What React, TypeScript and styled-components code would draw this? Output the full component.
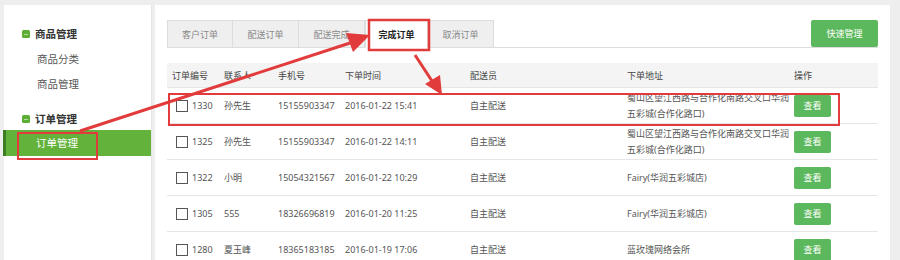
import React from 'react';
import styled, { createGlobalStyle } from 'styled-components';

const GlobalStyle = createGlobalStyle`
  html, body {
    margin: 0;
    padding: 0;
    background: #eeeeee;
    font-family: "Noto Sans", "Noto Sans CJK SC", sans-serif;
  }
`;

const Page = styled.div`
  position: relative;
  width: 900px;
  height: 260px;
  overflow: hidden;
  display: flex;
  padding: 5px 10px 0 4px;
  box-sizing: border-box;
  background: #eeeeee;
`;

const Sidebar = styled.div`
  width: 148px;
  background: #fff;
  padding-top: 20px;
  border-right: 1px solid #e4e4e4;
  box-sizing: border-box;
`;

const Group = styled.div<{ $gap?: number }>`
  margin-top: ${(p) => p.$gap || 0}px;
`;

const GroupTitle = styled.div`
  height: 18px;
  line-height: 18px;
  display: flex;
  align-items: center;
  padding-left: 18px;
  font-size: 10.5px;
  font-weight: 700;
  color: #333;
`;

const Bullet = styled.span`
  position: relative;
  width: 8px;
  height: 8px;
  border-radius: 1.5px;
  background: #5cae35;
  margin-right: 5px;
  &::after {
    content: '';
    position: absolute;
    left: 2px;
    right: 2px;
    top: 3.5px;
    height: 1px;
    background: rgba(255, 255, 255, 0.55);
  }
`;

const MenuList = styled.div<{ $top: number }>`
  padding-top: ${(p) => p.$top}px;
`;

const MenuItem = styled.div<{ $active?: boolean }>`
  height: ${(p) => (p.$active ? 26 : 25)}px;
  line-height: ${(p) => (p.$active ? 26 : 25)}px;
  padding-left: 30px;
  font-size: 10.5px;
  color: ${(p) => (p.$active ? '#fff' : '#555')};
  background: ${(p) => (p.$active ? '#62b23b' : 'transparent')};
  border-left: 3px solid ${(p) => (p.$active ? '#3f7d22' : 'transparent')};
  margin-left: ${(p) => (p.$active ? -1 : 0)}px;
`;

const Main = styled.div`
  flex: 1;
  margin-left: 3px;
  background: #fff;
  padding: 15px 12px 0 12px;
  box-sizing: border-box;
`;

const TabBar = styled.div`
  display: flex;
  align-items: flex-end;
  border-bottom: 1px solid #dddddd;
  height: 27px;
`;

const Tab = styled.div<{ $active?: boolean }>`
  width: ${(p) => (p.$active ? 63 : 66)}px;
  height: 28px;
  box-sizing: border-box;
  display: flex;
  align-items: center;
  justify-content: center;
  font-size: 9px;
  color: ${(p) => (p.$active ? '#222' : '#888')};
  font-weight: ${(p) => (p.$active ? 700 : 400)};
  background: ${(p) => (p.$active ? '#fff' : '#efefef')};
  border: 1px solid #dddddd;
  border-left-width: ${(p) => (p.$active ? 1 : 0)}px;
  border-bottom-color: ${(p) => (p.$active ? '#fff' : '#ddd')};
  margin-bottom: -1px;
  &:first-child {
    border-left-width: 1px;
  }
`;

const Spacer = styled.div`
  flex: 1;
`;

const GreenButton = styled.button<{ $w: number; $h: number }>`
  width: ${(p) => p.$w}px;
  height: ${(p) => p.$h}px;
  background: #5cb85c;
  border: none;
  border-radius: 2px;
  color: #fff;
  font-family: inherit;
  font-size: 9px;
  padding: 0;
  cursor: pointer;
`;

const TopButton = styled(GreenButton)`
  align-self: flex-start;
`;

const Table = styled.div`
  margin-top: 15px;
`;

const cols = '52px 54px 67px 125px 157px 167px 1fr';

const HeadRow = styled.div`
  display: grid;
  grid-template-columns: ${cols};
  height: 25px;
  align-items: center;
  background: #f4f4f4;
  border-bottom: 1px solid #e6e6e6;
  box-sizing: border-box;
`;

const HeadCell = styled.div`
  padding-left: 5px;
  font-size: 9px;
  color: #444;
`;

const Row = styled.div`
  display: grid;
  grid-template-columns: ${cols};
  height: 36px;
  align-items: center;
  border-bottom: 1px solid #e6e6e6;
  box-sizing: border-box;
`;

const Cell = styled.div<{ $first?: boolean }>`
  padding-left: ${(p) => (p.$first ? 9 : 5)}px;
  font-size: 9px;
  color: #555;
  display: flex;
  align-items: center;
`;

const AddressCell = styled.div`
  padding-left: 5px;
  font-size: 9px;
  line-height: 16px;
  color: #555;
`;

const Check = styled.span`
  width: 10px;
  height: 10px;
  border: 1px solid #555;
  background: #fff;
  margin-right: 4px;
  flex-shrink: 0;
`;

const Overlay = styled.svg`
  position: absolute;
  left: 0;
  top: 0;
  pointer-events: none;
`;

const orders = [
  { id: '1330', name: '孙先生', phone: '15155903347', time: '2016-01-22 15:41', staff: '自主配送', addr: '蜀山区望江西路与合作化南路交叉口华润五彩城(合作化路口)' },
  { id: '1325', name: '孙先生', phone: '15155903347', time: '2016-01-22 14:11', staff: '自主配送', addr: '蜀山区望江西路与合作化南路交叉口华润五彩城(合作化路口)' },
  { id: '1322', name: '小明', phone: '15054321567', time: '2016-01-22 10:29', staff: '自主配送', addr: 'Fairy(华润五彩城店)' },
  { id: '1305', name: '555', phone: '18326696819', time: '2016-01-20 11:25', staff: '自主配送', addr: 'Fairy(华润五彩城店)' },
  { id: '1280', name: '夏玉峰', phone: '18365183185', time: '2016-01-19 17:06', staff: '自主配送', addr: '蓝玫瑰网络会所' },
];

const tabs = ['客户订单', '配送订单', '配送完成', '完成订单', '取消订单'];
const heads = ['订单编号', '联系人', '手机号', '下单时间', '配送员', '下单地址', '操作'];

const RED = '#e23b3b';

const App: React.FC = () => {
  return (
    <Page>
      <GlobalStyle />
      <Sidebar>
        <Group>
          <GroupTitle><Bullet />商品管理</GroupTitle>
          <MenuList $top={4}>
            <MenuItem>商品分类</MenuItem>
            <MenuItem>商品管理</MenuItem>
          </MenuList>
        </Group>
        <Group $gap={13}>
          <GroupTitle><Bullet />订单管理</GroupTitle>
          <MenuList $top={2}>
            <MenuItem $active>订单管理</MenuItem>
          </MenuList>
        </Group>
      </Sidebar>
      <Main>
        <TabBar>
          {tabs.map((t) => (
            <Tab key={t} $active={t === '完成订单'}>{t}</Tab>
          ))}
          <Spacer />
          <TopButton $w={67} $h={27}>快速管理</TopButton>
        </TabBar>
        <Table>
          <HeadRow>
            {heads.map((h) => (
              <HeadCell key={h}>{h}</HeadCell>
            ))}
          </HeadRow>
          {orders.map((o) => (
            <Row key={o.id}>
              <Cell $first><Check />{o.id}</Cell>
              <Cell>{o.name}</Cell>
              <Cell>{o.phone}</Cell>
              <Cell>{o.time}</Cell>
              <Cell>{o.staff}</Cell>
              <AddressCell>{o.addr}</AddressCell>
              <Cell><GreenButton $w={37} $h={22}>查看</GreenButton></Cell>
            </Row>
          ))}
        </Table>
      </Main>
      <Overlay width={900} height={260} viewBox="0 0 900 260">
        <rect x={18} y={133} width={79} height={26} fill="none" stroke={RED} strokeWidth={2} />
        <rect x={369} y={20} width={60} height={30} fill="none" stroke={RED} strokeWidth={2.5} />
        <rect x={169} y={94} width={670} height={31} fill="none" stroke={RED} strokeWidth={2} />
        <line x1={80} y1={131} x2={350} y2={43} stroke={RED} strokeWidth={3} />
        <polygon points="370,35 346,33 353,52" fill={RED} />
        <line x1={415} y1={55} x2={432} y2={81} stroke={RED} strokeWidth={3} />
        <polygon points="442,95 425,84 440,75" fill={RED} />
      </Overlay>
    </Page>
  );
};

export default App;
